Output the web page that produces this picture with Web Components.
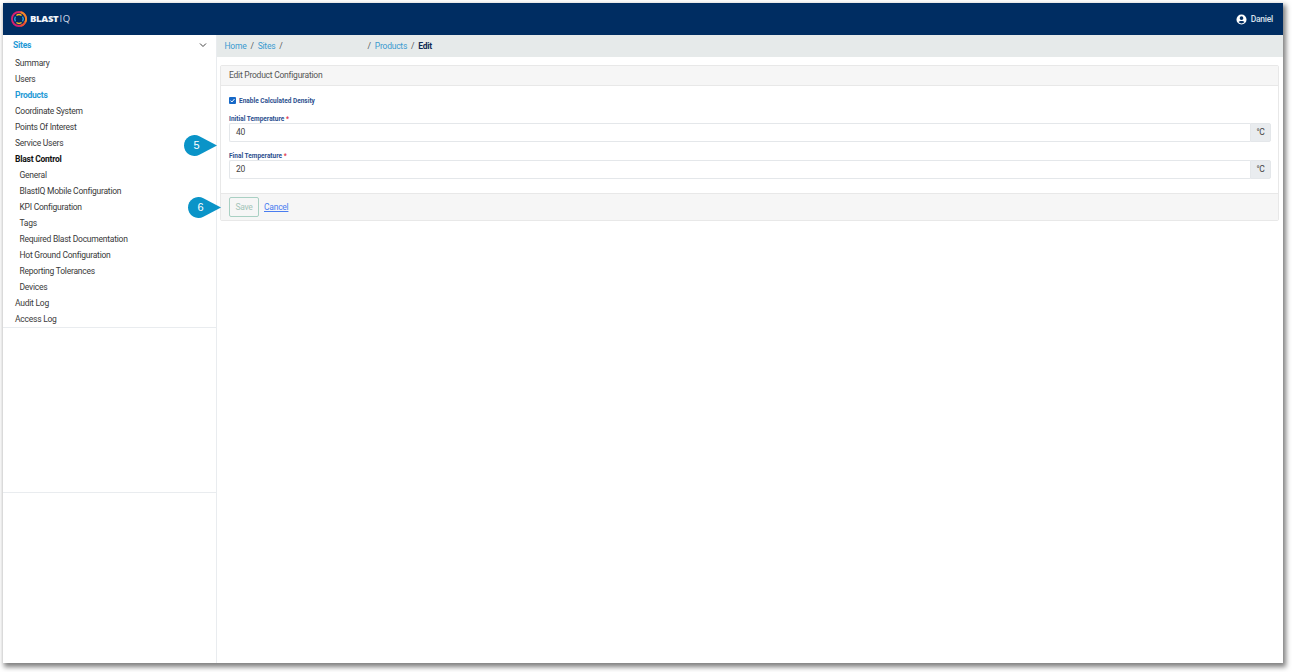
<!DOCTYPE html>
<html>
<head>
<meta charset="utf-8">
<style>
  html, body { margin: 0; padding: 0; height: 100%; background: #fff; }
  body { padding: 3px 9px 9px 3px; box-sizing: border-box; height: 672px; font-family: Roboto, "Liberation Sans", sans-serif; letter-spacing: -.24px; overflow: hidden; }
</style>
</head>
<body>
<app-shell>
  <top-bar slot="top"></top-bar>
  <side-nav slot="side"></side-nav>
  <bread-crumbs slot="crumbs"></bread-crumbs>
  <edit-card slot="main"></edit-card>
  <call-out slot="over" n="5" style="left:181px;top:132px"></call-out>
  <call-out slot="over" n="6" style="left:185px;top:194px"></call-out>
</app-shell>

<script>
class AppShell extends HTMLElement {
    constructor() {
        super();
        this.attachShadow({mode: "open"}).innerHTML = `
          <style>
            :host { display: flex; flex-direction: column; position: relative; width: 1280px; height: 660px; background: #fff;
                    box-shadow: 2px 3px 5px 1px rgba(0,0,0,.5); }
            .row { display: flex; flex: 1; min-height: 0; }
            .content { flex: 1; min-width: 0; }
            .pad { padding: 8px 4px 0 3px; }
            ::slotted(call-out) { position: absolute; }
          </style>
          <slot name="top"></slot>
          <div class="row">
            <slot name="side"></slot>
            <div class="content">
              <slot name="crumbs"></slot>
              <div class="pad"><slot name="main"></slot></div>
            </div>
          </div>
          <slot name="over"></slot>`;
    }
}

class TopBar extends HTMLElement {
    constructor() {
        super();
        this.attachShadow({mode: "open"}).innerHTML = `
          <style>
            :host { display: flex; align-items: center; justify-content: space-between; height: 32px; background: #002d62; color: #fff; padding: 0 10px 0 8px; }
            .logo { display: flex; align-items: center; gap: 3px; }
            .name { font: 900 9.5px/1 "Open Sans", Roboto, sans-serif; letter-spacing: -.3px; color: #f2f5fa; word-spacing: -1px; }
            .name span { font-weight: 400; letter-spacing: .6px; color: #d5deea; }
            .user { display: flex; align-items: center; gap: 4px; font-size: 8.5px; font-weight: 500; color: #d8e0ec; }
          </style>
          <div class="logo">
            <svg width="16" height="16" viewBox="0 0 34 34" fill="none">
              <circle cx="17" cy="17" r="15" stroke="#d6206f" stroke-width="4" />
              <path d="M20 2.300A15 15 0 0 1 30 24.500" stroke="#f08a24" stroke-width="4" />
              <path d="M30 24.500A15 15 0 0 1 20 31.700" stroke="#e8532b" stroke-width="4" />
              <path d="M11.500 9.500A9 9 0 0 1 22.500 9.500" stroke="#f5c21b" stroke-width="3" />
              <path d="M24.500 12A9 9 0 0 1 24.500 22" stroke="#2a9fd6" stroke-width="3" />
              <path d="M22.500 24.500A9 9 0 0 1 11.500 24.500" stroke="#f5c21b" stroke-width="3" />
              <path d="M9.500 22A9 9 0 0 1 9.500 12" stroke="#2a9fd6" stroke-width="3" />
            </svg>
            <div class="name">BLAST <span>IQ</span></div>
          </div>
          <div class="user">
            <svg width="11" height="11" viewBox="0 0 24 24"><path fill="#fff" d="M12 1a11 11 0 1 0 0 22 11 11 0 0 0 0-22zm0 4a4 4 0 1 1 0 8 4 4 0 0 1 0-8zm0 15.500a8.700 8.700 0 0 1-6.600-3c.9-1.700 3.800-2.500 6.600-2.500s5.700.8 6.600 2.500a8.700 8.700 0 0 1-6.600 3z"/></svg>
            Daniel
          </div>`;
    }
}

const NAV = [
    ["Summary", ""], ["Users", ""], ["Products", "on"], ["Coordinate System", ""],
    ["Points Of Interest", ""], ["Service Users", ""], ["Blast Control", "bold"],
    ["General", "sub"], ["BlastIQ Mobile Configuration", "sub"], ["KPI Configuration", "sub"],
    ["Tags", "sub"], ["Required Blast Documentation", "sub"], ["Hot Ground Configuration", "sub"],
    ["Reporting Tolerances", "sub"], ["Devices", "sub"], ["Audit Log", ""], ["Access Log", ""]
];

class SideNav extends HTMLElement {
    constructor() {
        super();
        const items = NAV.map(i => `<div class="item ${i[1]}">${i[0]}</div>`).join("");
        this.attachShadow({mode: "open"}).innerHTML = `
          <style>
            :host { display: flex; flex-direction: column; width: 213px; flex: none; border-right: 1px solid #e9ecef; font-size: 8.5px; color: #3a3a3a; }
            .head { display: flex; justify-content: space-between; align-items: center; height: 20px; padding: 0 9px 0 10px; color: #1f9ad6; font-weight: 700; }
            .list { height: 273px; box-sizing: border-box; border-bottom: 1px solid #e9ecef; }
            .item { height: 16px; line-height: 16px; padding-left: 12px; white-space: nowrap; }
            .on { color: #1f9ad6; font-weight: 700; }
            .bold { color: #111; font-weight: 700; }
            .sub { padding-left: 16.500px; }
            .gap { height: 164px; border-bottom: 1px solid #e9ecef; }
          </style>
          <div class="head">Sites
            <svg width="8" height="6" viewBox="0 0 8 6" fill="none"><path d="M1 1.500 4 4.500 7 1.500" stroke="#444" stroke-width="1"/></svg>
          </div>
          <div class="list">${items}</div>
          <div class="gap"></div>`;
    }
}

class BreadCrumbs extends HTMLElement {
    constructor() {
        super();
        this.attachShadow({mode: "open"}).innerHTML = `
          <style>
            :host { display: flex; align-items: center; height: 21px; padding-bottom: 1px; background: #e6eaea; padding-left: 7.500px; font-size: 8.5px; color: #555; white-space: nowrap; }
            a { color: #3a9ad0; text-decoration: none; }
            i { font-style: normal; margin: 0 4px; }
            .blank { width: 77px; }
            b { color: #0f2a55; font-weight: 700; }
          </style>
          <a>Home</a><i>/</i><a>Sites</a><i>/</i><span class="blank"></span><i>/</i><a>Products</a><i>/</i><b>Edit</b>`;
    }
}

class TempField extends HTMLElement {
    constructor() {
        super();
        this.attachShadow({mode: "open"}).innerHTML = `
          <style>
            :host { display: block; }
            label { display: block; font-size: 6.500px; letter-spacing: 0; font-weight: 700; color: #2c4f8f; line-height: 8px; padding-top: 1px; }
            label span { color: #e0354b; }
            .group { display: flex; height: 19px; }
            .val { flex: 1; box-sizing: border-box; border: 1px solid #e4e7ea; border-right: 0; font-size: 8.5px; color: #444; line-height: 17px; padding-left: 6px; border-radius: 2px 0 0 2px; }
            .unit { width: 21px; box-sizing: border-box; background: #e9ecef; border: 1px solid #e4e7ea; font-size: 8.5px; color: #444; text-align: center; line-height: 17px; border-radius: 0 2px 2px 0; }
          </style>
          <label>${this.getAttribute("label")} <span>*</span></label>
          <div class="group"><div class="val">${this.getAttribute("value")}</div><div class="unit">°C</div></div>`;
    }
}

class EditCard extends HTMLElement {
    constructor() {
        super();
        this.attachShadow({mode: "open"}).innerHTML = `
          <style>
            :host { display: block; border: 1px solid #e8e8e8; border-radius: 2px; font-size: 8.5px; color: #444; }
            .head { height: 19px; line-height: 19px; padding-left: 8px; background: #f6f6f6; border-bottom: 1px solid #e8e8e8; color: #555; }
            .body { height: 107px; padding: 10px 7px 0 8px; box-sizing: border-box; display: flex; flex-direction: column; }
            .check { display: flex; align-items: center; gap: 3px; height: 9px; margin-bottom: 9px; font-size: 6.500px; letter-spacing: 0; font-weight: 700; color: #2c4f8f; }
            .box { width: 7px; height: 7px; background: #1668c7; border-radius: 1px; display: flex; }
            temp-field + temp-field { margin-top: 9px; }
            .foot { height: 27px; box-sizing: border-box; display: flex; align-items: center; gap: 5px; padding-left: 8px; background: #f6f6f6; border-top: 1px solid #e8e8e8; }
            .save { width: 30px; height: 20px; box-sizing: border-box; border: 1px solid #a9d0c3; border-radius: 2px; color: #a3c4b8; text-align: center; line-height: 18px; }
            a { color: #4a7df0; text-decoration: underline; }
          </style>
          <div class="head">Edit Product Configuration</div>
          <div class="body">
            <div class="check">
              <span class="box"><svg width="7" height="7" viewBox="0 0 7 7" fill="none"><path d="M1.500 3.600 2.900 5 5.500 2" stroke="#fff" stroke-width="1"/></svg></span>
              Enable Calculated Density
            </div>
            <temp-field label="Initial Temperature" value="40"></temp-field>
            <temp-field label="Final Temperature" value="20"></temp-field>
          </div>
          <div class="foot"><div class="save">Save</div><a>Cancel</a></div>`;
    }
}

class CallOut extends HTMLElement {
    constructor() {
        super();
        this.attachShadow({mode: "open"}).innerHTML = `
          <style>
            :host { display: block; width: 33px; height: 21px; }
            svg { position: absolute; left: 0; top: 0; }
            span { position: absolute; left: 0; top: 0; width: 25px; height: 21px; text-align: center; color: #fff; font: 11px/21px "Liberation Sans", sans-serif; letter-spacing: 0; }
          </style>
          <svg width="33" height="21" viewBox="0 0 33 21"><path fill="#0a94c8" d="M33 10.500 15.400 1.200A10.500 10.500 0 1 0 15.400 19.800Z"/></svg>
          <span>${this.getAttribute("n")}</span>`;
    }
}

customElements.define("app-shell", AppShell);
customElements.define("top-bar", TopBar);
customElements.define("side-nav", SideNav);
customElements.define("bread-crumbs", BreadCrumbs);
customElements.define("temp-field", TempField);
customElements.define("edit-card", EditCard);
customElements.define("call-out", CallOut);
</script>
</body>
</html>
